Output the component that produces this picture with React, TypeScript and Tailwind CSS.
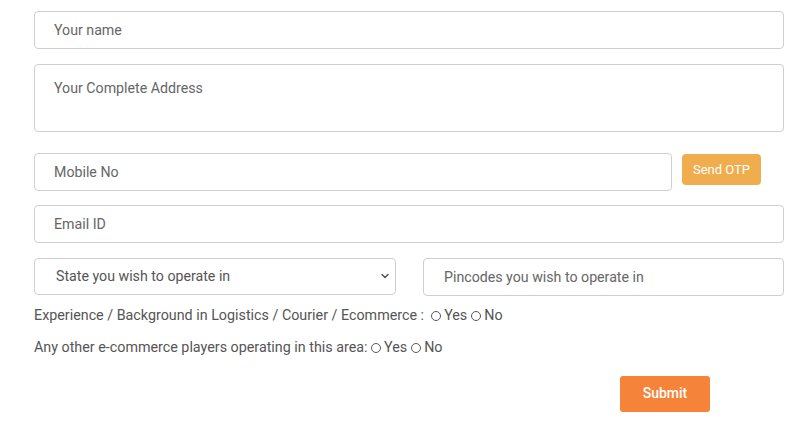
import { ChevronDown } from 'lucide-react';

function Radio({ label }: { label: string }) {
    return (
        <label className="inline-flex items-center gap-[3px]">
            <span className="inline-block h-[10px] w-[10px] rounded-full border border-[#555]" />
            <span>{label}</span>
        </label>
    );
}

const field =
    'h-[38px] rounded-[4px] border border-[#cfcfcf] bg-white px-[19px] text-[14.2px] text-[#555] outline-none placeholder:text-[#666]';

export default function App() {
    return (
        <div className="min-h-[425px] w-[796px] bg-white font-['Roboto',sans-serif]">
            <form className="flex w-[784px] flex-col pl-[34px] pt-[11px]">
                <input placeholder="Your name" className={`${field} w-full`} />
                <textarea
                    placeholder="Your Complete Address"
                    className="mt-[15px] block h-[68px] w-full resize-none rounded-[4px] border border-[#cfcfcf] px-[19px] pt-[13px] text-[14.2px] text-[#555] outline-none placeholder:text-[#666]"
                />
                <div className="mt-[21px] flex items-start gap-[10px]">
                    <input placeholder="Mobile No" className={`${field} w-[638px] shrink-0`} />
                    <button
                        type="button"
                        className="mt-[1px] h-[31px] w-[79px] shrink-0 rounded-[4px] bg-[#f0ad4e] text-[13px] text-white"
                    >
                        Send OTP
                    </button>
                </div>
                <input placeholder="Email ID" className={`${field} mt-[14px] w-full`} />
                <div className="mt-[15px] flex gap-[27px]">
                    <div className="relative w-[362px] shrink-0">
                        <div className="flex h-[37px] items-center rounded-[4px] border border-[#cfcfcf] pl-[21px] text-[14.2px] text-[#555]">
                            State you wish to operate in
                        </div>
                        <ChevronDown
                            size={12}
                            strokeWidth={3}
                            className="absolute right-[5px] top-[12px] text-[#555]"
                        />
                    </div>
                    <input
                        placeholder="Pincodes you wish to operate in"
                        className={`${field} h-[37px] w-[361px] shrink-0 pl-[20px]`}
                    />
                </div>
                <div className="mt-[9px] flex items-center text-[14.3px] text-[#555]">
                    <span>Experience / Background in Logistics / Courier / Ecommerce :&nbsp;&nbsp;</span>
                    <Radio label="Yes" />
                    <span className="w-[4px]" />
                    <Radio label="No" />
                </div>
                <div className="mt-[11px] flex items-center text-[14.3px] text-[#555]">
                    <span>Any other e-commerce players operating in this area:&nbsp;</span>
                    <Radio label="Yes" />
                    <span className="w-[4px]" />
                    <Radio label="No" />
                </div>
                <div className="mt-[17px] pl-[586px]">
                    <button
                        type="button"
                        className="h-[36px] w-[90px] rounded-[3px] bg-[#f5843a] text-[14px] font-medium text-white"
                    >
                        Submit
                    </button>
                </div>
            </form>
        </div>
    );
}
